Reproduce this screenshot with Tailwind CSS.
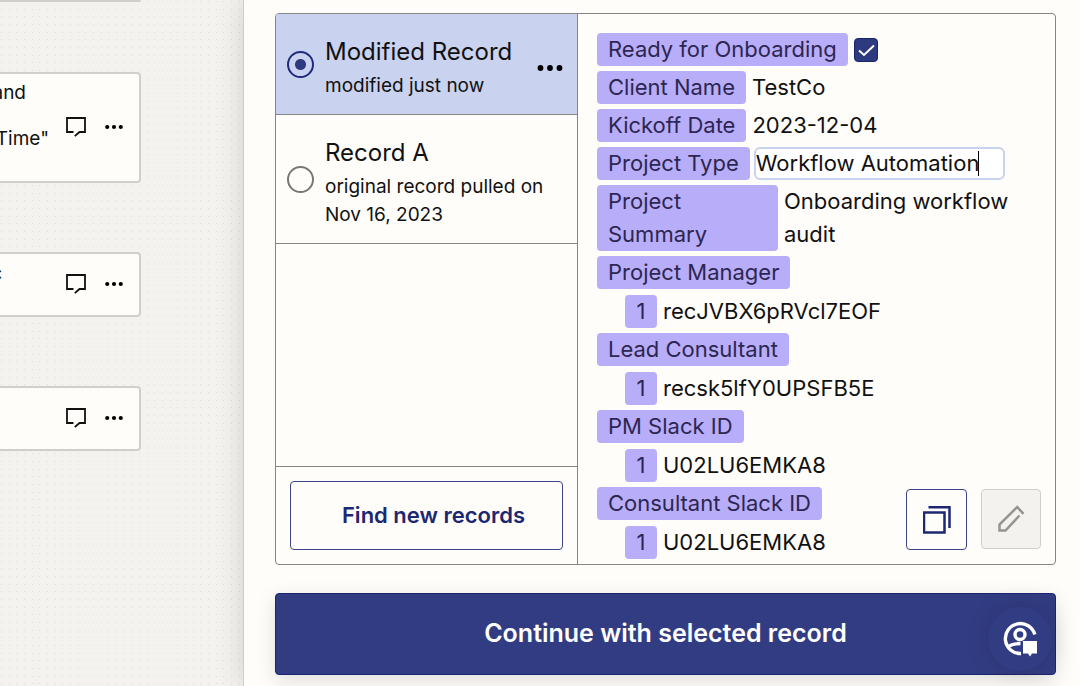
<!DOCTYPE html>
<html lang="en">
<head>
<meta charset="utf-8">
<meta name="viewport" content="width=device-width, initial-scale=1">
<title>Select record</title>
<script src="https://cdn.jsdelivr.net/npm/@tailwindcss/browser@4"></script>
</head>
<body class="bg-[#fffdf9] font-['Inter',sans-serif] text-[#111] overflow-x-hidden">
<svg class="hidden" aria-hidden="true">
  <symbol id="dots" viewBox="0 0 28 8"><circle cx="4.5" cy="4" r="2.9"/><circle cx="14" cy="4" r="2.9"/><circle cx="23.5" cy="4" r="2.9"/></symbol>
  <symbol id="comment" viewBox="0 0 20 20"><path d="M7.500 15H1V1h18v14h-5.500L8.800 19.200" fill="none" stroke="currentColor" stroke-width="1.800"/></symbol>
</svg>
<div class="flex min-h-screen">
  <!-- Workflow canvas -->
  <aside class="relative w-[243px] shrink-0 overflow-hidden bg-[#f3f2ef]" aria-label="Workflow">
    <svg class="absolute inset-0 size-full" aria-hidden="true">
      <defs><pattern id="grid" width="23" height="23" patternUnits="userSpaceOnUse"><g fill="#dddcda"><path d="M1 1h1v1H1zM9 1h1v1H9zM16 1h1v1h-1zM1 9h1v1H1zM9 9h1v1H9zM16 9h1v1h-1zM1 16h1v1H1zM9 16h1v1H9zM16 16h1v1h-1z"/></g></pattern></defs>
      <rect width="100%" height="100%" fill="url(#grid)"/>
    </svg>
    <div class="relative flex w-[141px] flex-col">
      <div class="h-[2px] rounded-br bg-[#d0cfcc]"></div>
      <section class="mt-[70px] flex h-[111px] items-center justify-between rounded-r border-2 border-l-0 border-[#d0cfcc] bg-[#fffdf9] pr-[15px] pb-[2px]">
        <div class="-mt-1 w-[49px] self-start text-right text-[19px] leading-[46px] whitespace-nowrap"><p class="flex justify-end pr-[23px]">and</p><p class="flex justify-end">"Time"</p></div>
        <div class="flex items-center gap-[18px]">
          <button aria-label="Comment"><svg class="size-5"><use href="#comment"/></svg></button>
          <button aria-label="More"><svg class="h-[6px] w-5"><use href="#dots"/></svg></button>
        </div>
      </section>
      <section class="mt-[69px] flex h-[65px] items-center justify-between rounded-r border-2 border-l-0 border-[#d0cfcc] bg-[#fffdf9] pr-[15px] pb-[2px]">
        <div class="flex w-[2px] justify-end self-start pt-1 text-[19px] leading-8">c</div>
        <div class="flex items-center gap-[18px]">
          <button aria-label="Comment"><svg class="size-5"><use href="#comment"/></svg></button>
          <button aria-label="More"><svg class="h-[6px] w-5"><use href="#dots"/></svg></button>
        </div>
      </section>
      <section class="mt-[69px] flex h-[65px] items-center justify-end rounded-r border-2 border-l-0 border-[#d0cfcc] bg-[#fffdf9] pr-[15px] pb-[2px]">
        <div class="flex items-center gap-[18px]">
          <button aria-label="Comment"><svg class="size-5"><use href="#comment"/></svg></button>
          <button aria-label="More"><svg class="h-[6px] w-5"><use href="#dots"/></svg></button>
        </div>
      </section>
    </div>
  </aside>

  <!-- Record panel -->
  <main class="relative flex min-w-0 flex-1 flex-col border-l border-[#cfcecb] bg-[#fffdf9] pt-[13px] pr-6 pl-[31px] shadow-[0_0_26px_rgba(0,0,0,0.14)]">
    <div class="flex rounded border border-[#858585]">
      <div class="flex w-[302px] shrink-0 flex-col border-r border-[#858585]">
        <div class="flex items-center gap-[11px] rounded-tl-[3px] border-b border-[#858585] bg-[#c9d2ee] pt-[18px] pr-[13px] pb-[14px] pl-[11px]">
          <input id="r1" type="radio" name="record" checked class="mb-[3px] size-[27px] shrink-0 appearance-none rounded-full border-2 border-[#1f2a7c] bg-[radial-gradient(circle,#2d3a80_0_5px,transparent_6px)]">
          <label for="r1" class="flex-1"><span class="block text-2xl leading-10 whitespace-nowrap">Modified Record</span><span class="block text-[19px] leading-7">modified just now</span></label>
          <button aria-label="Record options" class="pt-[3px]"><svg class="h-[8px] w-[28px]"><use href="#dots"/></svg></button>
        </div>
        <div class="flex items-center gap-[11px] border-b border-[#858585] pt-[18px] pr-[13px] pb-[14px] pl-[11px]">
          <input id="r2" type="radio" name="record" class="mb-[3px] size-[27px] shrink-0 appearance-none rounded-full border-2 border-[#777]">
          <label for="r2" class="flex-1"><span class="block text-2xl leading-10">Record A</span><span class="block text-[19px] leading-7">original record pulled on Nov 16, 2023</span></label>
        </div>
        <div class="mt-auto border-t border-[#858585] p-[14px]">
          <button class="h-[69px] w-full rounded border border-[#3b4487] pb-px pl-[14px] text-[22px] font-semibold text-[#1d2872]">Find new records</button>
        </div>
      </div>

      <div class="relative flex-1 pt-[19px] pb-[5px] pl-[19px] text-[22px] leading-[33px]">
        <div class="flex flex-col gap-[5px]">
          <div class="flex items-center gap-[6px]"><label for="ready" class="rounded bg-[#b8adf9] px-[11px] text-[#2d2650]">Ready for Onboarding</label>
            <span class="relative size-6"><input id="ready" type="checkbox" checked class="block size-6 appearance-none rounded border border-[#1a2570] bg-[#2d3a80]"><svg class="pointer-events-none absolute inset-0 size-6" viewBox="0 0 24 24" fill="none" stroke="#fff" stroke-width="2"><path d="M5 12.500l5 4.500L20 7.500"/></svg></span></div>
          <div class="flex gap-[6px]"><span class="rounded bg-[#b8adf9] px-[11px] text-[#2d2650]">Client Name</span><span>TestCo</span></div>
          <div class="flex gap-[6px]"><span class="rounded bg-[#b8adf9] px-[11px] text-[#2d2650]">Kickoff Date</span><span>2023-12-04</span></div>
          <div class="flex gap-1"><label for="ptype" class="rounded bg-[#b8adf9] px-[11px] text-[#2d2650]">Project Type</label>
            <span class="relative w-[251px]"><input id="ptype" type="text" value="Workflow Automation" class="block h-[33px] w-full rounded-md border-2 border-[#c9d2ee] bg-white outline-none"><span class="absolute top-1 left-[224px] h-[25px] w-px bg-black"></span></span></div>
          <div class="flex gap-[6px]"><span class="w-[181px] shrink-0 rounded bg-[#b8adf9] pr-[60px] pl-[11px] text-[#2d2650]">Project Summary</span><span class="w-[240px]">Onboarding workflow audit</span></div>
          <div class="flex flex-col items-start gap-[6px]"><span class="rounded bg-[#b8adf9] px-[11px] text-[#2d2650]">Project Manager</span><div class="flex gap-[6px] pl-7"><span class="w-8 rounded bg-[#b8adf9] text-center text-[#2d2650]">1</span><span>recJVBX6pRVcl7EOF</span></div></div>
          <div class="flex flex-col items-start gap-[6px]"><span class="rounded bg-[#b8adf9] px-[11px] text-[#2d2650]">Lead Consultant</span><div class="flex gap-[6px] pl-7"><span class="w-8 rounded bg-[#b8adf9] text-center text-[#2d2650]">1</span><span>recsk5lfY0UPSFB5E</span></div></div>
          <div class="flex flex-col items-start gap-[6px]"><span class="rounded bg-[#b8adf9] px-[11px] text-[#2d2650]">PM Slack ID</span><div class="flex gap-[6px] pl-7"><span class="w-8 rounded bg-[#b8adf9] text-center text-[#2d2650]">1</span><span>U02LU6EMKA8</span></div></div>
          <div class="flex flex-col items-start gap-[6px]"><span class="rounded bg-[#b8adf9] px-[11px] text-[#2d2650]">Consultant Slack ID</span><div class="flex gap-[6px] pl-7"><span class="w-8 rounded bg-[#b8adf9] text-center text-[#2d2650]">1</span><span>U02LU6EMKA8</span></div></div>
        </div>
        <div class="absolute right-[14px] bottom-[14px] flex gap-[14px]">
          <button aria-label="Duplicate" class="grid size-[61px] place-items-center rounded border border-[#3b4487] text-[#1d2872]"><svg class="size-7" viewBox="0 0 28 28" fill="none" stroke="currentColor" stroke-width="2.500"><path d="M1 6.500h20.500v20H1zM5.500 1.200H26.500V22"/></svg></button>
          <button aria-label="Edit" disabled class="grid size-[60px] place-items-center rounded border border-[#d0cfcc] bg-[#f3f2ef] text-[#959490]"><svg class="size-7" viewBox="0 0 28 28" fill="none" stroke="currentColor" stroke-width="2.500"><path d="M22.500 10.500L8.500 25.500H2.500v-6L20.200 2l6.300 6.800"/></svg></button>
        </div>
      </div>
    </div>

    <div class="relative mt-7">
      <button class="h-[82px] w-full rounded border border-[#1a2570] bg-[#323c82] pb-px text-[25px] font-semibold text-white shadow-[0_6px_20px_rgba(0,0,0,0.12)]">Continue with selected record</button>
      <button aria-label="Help" class="absolute right-1 bottom-1 grid size-16 place-items-center rounded-full bg-[#323c82] shadow-[0_0_24px_rgba(0,0,0,0.14)]">
        <svg class="size-9" viewBox="0 0 36 36" fill="none" stroke="#fff" stroke-width="3.400"><path d="M32.800 13.500A15 15 0 1 0 19 32.500M7 25q5-2.500 11.500-2.500"/><circle cx="18" cy="13.500" r="5"/><path d="M21 20h14v12.500h-5l-2 3-2-3h-5z" fill="#fff" stroke="none"/></svg>
      </button>
    </div>
  </main>
</div>
</body>
</html>
